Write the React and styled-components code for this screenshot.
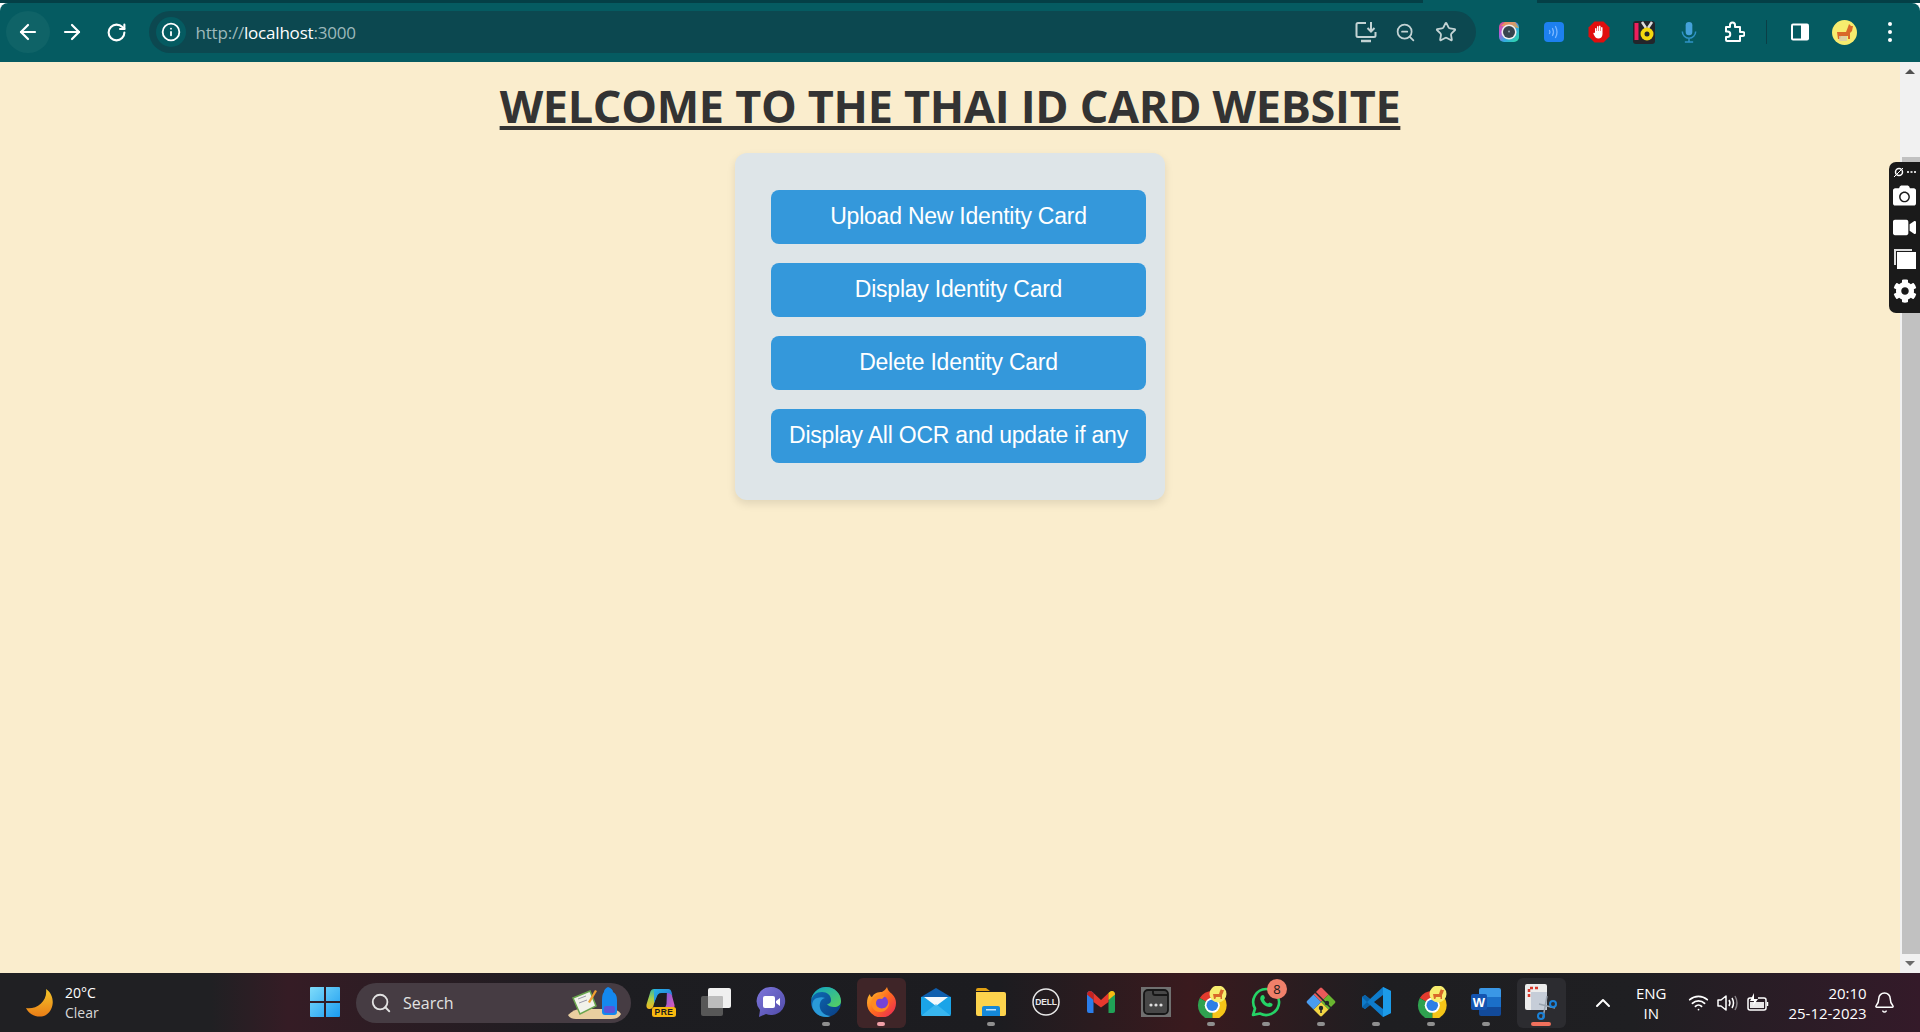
import styled, { createGlobalStyle } from "styled-components";
import {
  ArrowLeft,
  ArrowRight,
  RotateCw,
  Info,
  ZoomOut,
  Star,
  Search,
  ChevronUp,
  Bell,
  Wifi,
} from "lucide-react";
import { FaCamera, FaVideo, FaCog } from "react-icons/fa";

const GlobalStyle = createGlobalStyle`
  html, body {
    margin: 0;
    padding: 0;
    height: 100%;
    overflow: hidden;
  }
  #root {
    height: 100%;
  }
`;

const Shell = styled.div`
  display: flex;
  flex-direction: column;
  height: 1032px;
  font-family: "Open Sans", sans-serif;
`;

/* browser chrome */

const TabStrip = styled.div`
  display: flex;
  height: 3px;
  background: #043f46;
`;

const TabPiece = styled.div`
  width: 114px;
  margin-left: 1423px;
  background: #055b61;
`;

const Toolbar = styled.div`
  display: flex;
  align-items: center;
  height: 59px;
  padding: 0 0 1px 6px;
  box-sizing: border-box;
  background: #055b61;
  border-radius: 8px 8px 0 0;
  color: #fff;
`;

const NavButton = styled.div`
  display: flex;
  align-items: center;
  justify-content: center;
  width: 44px;
  height: 42px;
  margin-right: ${(p) => p.$gap || 0}px;
  border-radius: 50%;
  background: ${(p) => (p.$hover ? "#0f6367" : "transparent")};
`;

const AddressBar = styled.div`
  display: flex;
  align-items: center;
  width: 1327px;
  height: 42px;
  margin-left: 10.5px;
  padding: 0 10px 0 7px;
  box-sizing: border-box;
  border-radius: 21px;
  background: #0c4850;
`;

const InfoBadge = styled.div`
  display: flex;
  align-items: center;
  justify-content: center;
  width: 30px;
  height: 30px;
  border-radius: 50%;
  background: #055b61;
`;

const Url = styled.div`
  flex: 1;
  margin-left: 10px;
  font-size: 17px;
  letter-spacing: -0.2px;
  color: #9db9bb;

  b {
    font-weight: 400;
    color: #fff;
  }
`;

const BarIcon = styled.div`
  display: flex;
  align-items: center;
  justify-content: center;
  width: 40px;
  color: #c3d3d4;
`;

const ExtIcon = styled.div`
  display: flex;
  align-items: center;
  justify-content: center;
  width: 45px;
  height: 30px;
  margin-left: ${(p) => p.$offset || 0}px;
`;

const Divider = styled.div`
  width: 1px;
  height: 24px;
  margin: 0 10px;
  background: #0b3f46;
`;

const MenuDots = styled.div`
  display: flex;
  flex-direction: column;
  gap: 4px;

  i {
    width: 4px;
    height: 4px;
    border-radius: 50%;
    background: #fff;
  }
`;

/* page */

const Viewport = styled.div`
  position: relative;
  display: flex;
  flex: 1;
  min-height: 0;
`;

const Page = styled.main`
  flex: 1;
  display: flex;
  flex-direction: column;
  align-items: center;
  background: #faedcd;
`;

const Title = styled.h1`
  margin: 19px 0 22px;
  font-family: "Open Sans", sans-serif;
  font-size: 45px;
  line-height: 50px;
  font-weight: 700;
  letter-spacing: -0.3px;
  color: #333;
  text-decoration: underline;
  text-decoration-thickness: 4px;
  text-underline-offset: 3px;
`;

const Card = styled.div`
  display: flex;
  flex-direction: column;
  gap: 19px;
  width: 430px;
  padding: 37px 19px 37px 36px;
  box-sizing: border-box;
  border-radius: 12px;
  background: #dee5e8;
  box-shadow: 0 4px 8px rgba(0, 0, 0, 0.1);
`;

const ActionButton = styled.button`
  height: 54px;
  padding: 0 0 2px;
  border: 0;
  border-radius: 8px;
  background: #3498db;
  color: #fff;
  font-family: "Liberation Sans", Arial, sans-serif;
  font-size: 23px;
  letter-spacing: -0.23px;
`;

const Scrollbar = styled.div`
  position: relative;
  display: flex;
  flex-direction: column;
  align-items: center;
  width: 20px;
  background: #f1f1f1;
`;

const ScrollArrow = styled.div`
  width: 0;
  height: 0;
  margin: 7px 0;
  border-left: 5px solid transparent;
  border-right: 5px solid transparent;
  ${(p) => (p.$down ? "border-top: 5px solid #6b6b6b;" : "border-bottom: 5px solid #505050;")}
`;

const ScrollThumb = styled.div`
  flex: 1;
  width: 18px;
  margin: 76px 0 0 1px;
  background: #c1c1c1;
`;

const CaptureWidget = styled.div`
  position: absolute;
  top: 100px;
  right: 0;
  display: flex;
  flex-direction: column;
  align-items: center;
  gap: 9px;
  width: 31px;
  height: 151px;
  padding-top: 4px;
  box-sizing: border-box;
  border-radius: 7px 0 0 7px;
  background: #1a1a1a;
  color: #fff;
`;

const WidgetLogo = styled.div`
  display: flex;
  margin-bottom: -3.5px;
`;

/* taskbar */

const Taskbar = styled.footer`
  display: flex;
  align-items: center;
  height: 59px;
  color: #fff;
  background: linear-gradient(
    90deg,
    #202023 0,
    #202023 11%,
    #351c25 15%,
    #1d1d21 30%,
    #1c1c20 52%,
    #3a1a1e 62%,
    #1e1e21 72%,
    #1f1f22 85%,
    #341a29 100%
  );
`;

const Weather = styled.div`
  display: flex;
  align-items: center;
  gap: 11px;
  width: 297px;
  padding-left: 26px;
  box-sizing: border-box;
`;

const WeatherText = styled.div`
  font-size: 14px;
  line-height: 20px;

  span {
    display: block;
    color: #d8d8d8;
  }
`;

const SearchPill = styled.div`
  display: flex;
  align-items: center;
  gap: 11px;
  width: 275px;
  height: 40px;
  margin: 0 2.5px 0 4px;
  padding: 0 9px 0 14px;
  box-sizing: border-box;
  border-radius: 20px;
  background: #463c43;
  font-size: 16px;
  color: #e2e2e2;

  span {
    flex: 1;
  }
`;

const Cell = styled.div`
  position: relative;
  display: flex;
  align-items: center;
  justify-content: center;
  width: 55px;
  height: 50px;
  padding-bottom: 1px;
  box-sizing: border-box;
  border-radius: 6px;
`;

const CellGlow = styled.div`
  position: absolute;
  inset: 0 3px;
  border-radius: 6px;
  background: ${(p) => p.$bg};
`;

const CellIcon = styled.div`
  position: relative;
  display: flex;
`;

const RunDot = styled.div`
  position: absolute;
  left: 50%;
  bottom: 2px;
  width: ${(p) => p.$w || 8}px;
  height: 4px;
  transform: translateX(-50%);
  border-radius: 2px;
  background: ${(p) => p.$color || "#8f8f8f"};
`;

const CountBadge = styled.div`
  position: absolute;
  top: -8px;
  right: -6px;
  width: 20px;
  height: 20px;
  border-radius: 50%;
  background: #f0806a;
  color: #1a1a1a;
  font-size: 13px;
  line-height: 20px;
  text-align: center;
`;

const Tray = styled.div`
  display: flex;
  align-items: center;
  margin-left: 16.7px;
`;

const Chevron = styled.div`
  display: flex;
  justify-content: center;
  width: 36px;
`;

const Lang = styled.div`
  width: 60px;
  font-size: 15px;
  line-height: 20px;
  text-align: center;
`;

const Status = styled.div`
  display: flex;
  align-items: center;
  justify-content: center;
  width: 30px;
  margin-left: ${(p) => p.$offset || 0}px;
`;

const Clock = styled.div`
  width: 93.500px;
  font-size: 15px;
  line-height: 20px;
  text-align: right;
`;

const BellBox = styled.div`
  display: flex;
  justify-content: center;
  width: 28px;
  margin-left: 3.7px;
`;

/* drawn icons */

const InstallIcon = () => (
  <svg width="22" height="22" viewBox="0 0 22 22" fill="none" stroke="#c3d3d4" strokeWidth="2">
    <path d="M11 2H3a1.5 1.5 0 0 0-1.5 1.5v11A1.5 1.5 0 0 0 3 16h16a1.5 1.5 0 0 0 1.5-1.5V11" />
    <path d="M6 20h10" strokeWidth="2.5" />
    <path d="M16 1v9M12.5 7l3.5 3.5L19.500 7" />
  </svg>
);

const LensIcon = () => (
  <svg width="24" height="24" viewBox="0 0 24 24">
    <defs>
      <linearGradient id="lens" x1="0" y1="0" x2="1" y2="1">
        <stop offset="0" stopColor="#e64a78" />
        <stop offset="0.3" stopColor="#b85bd8" />
        <stop offset="0.6" stopColor="#32a9e0" />
        <stop offset="1" stopColor="#2fe0a0" />
      </linearGradient>
    </defs>
    <rect x="2" y="2" width="20" height="20" rx="5" fill="url(#lens)" />
    <path d="M4 6 8 2h10l4 6" fill="#f3a93c" opacity=".7" />
    <circle cx="12" cy="12" r="7.600" fill="#eee" />
    <circle cx="12" cy="12" r="6" fill="#37444e" />
    <circle cx="12" cy="11.500" r="1" fill="#8fa4b0" />
  </svg>
);

const WavesIcon = () => (
  <svg width="24" height="24" viewBox="0 0 24 24" fill="none" stroke="#7ab6ff" strokeLinecap="round" strokeWidth="1.300">
    <rect x="2" y="2" width="20" height="20" rx="4" fill="#1d80f0" stroke="none" />
    <path d="M7.500 10.500q1 1.500 0 3M10.500 8.500q2 3.500 0 7M13.500 6.500q3 5.500 0 11" />
  </svg>
);

const BlockIcon = () => (
  <svg width="24" height="24" viewBox="0 0 24 24">
    <path d="M7.500 1.500h9l6 6v9l-6 6h-9l-6-6v-9z" fill="#e00e0e" />
    <path d="M8 13V8.500a1 1 0 0 1 1.500 0V11h.5V6.500a1 1 0 0 1 1.500 0V11h.5V6a1 1 0 0 1 1.500 0v5h.5V7.500a1 1 0 0 1 1.500 0V14c0 3-2 4.500-4 4.500-2.500 0-3.500-1.500-5-4.500-.5-1.200.7-1.800 1.500-1z" fill="#fff" />
  </svg>
);

const MedalIcon = () => (
  <svg width="24" height="24" viewBox="0 0 24 24">
    <rect x="1" y="1" width="22" height="23" rx="3" fill="#23252b" />
    <rect x="2.500" y="3" width="4" height="17" fill="#ef1f5d" />
    <path d="M10 2l4 6M20 2l-4 6" stroke="#ddd" strokeWidth="2.500" />
    <circle cx="15" cy="14" r="6.500" fill="#f4d80f" />
    <circle cx="15" cy="14" r="2.500" fill="#23252b" />
  </svg>
);

const MicIcon = () => (
  <svg width="20" height="24" viewBox="0 0 24 26" fill="none" stroke="#2f93c6" strokeWidth="1.800">
    <rect x="8" y="1" width="8" height="16" rx="4" fill="#45a2da" stroke="none" />
    <path d="M4 12.500a8 8 0 0 0 16 0M12 20.500V25M7 25h10" />
  </svg>
);

const PuzzleIcon = () => (
  <svg width="22" height="22" viewBox="0 0 22 22" fill="none" stroke="#fff" strokeWidth="2" strokeLinejoin="round">
    <path d="M3 6h4V4a2.500 2.500 0 0 1 5 0v2h5v5h2.500a2 2 0 0 1 0 4H17v5H4a1 1 0 0 1-1-1v-3h1.500a2.700 2.700 0 0 0 0-5.500H3z" />
  </svg>
);

const PanelIcon = () => (
  <svg width="20" height="20" viewBox="0 0 20 20">
    <rect x="1" y="1.500" width="18" height="17" rx="2" fill="#fff" />
    <rect x="3" y="3.500" width="8" height="13" fill="#055b61" />
  </svg>
);

const CorgiAvatar = ({ size = 25 }) => (
  <svg width={size} height={size} viewBox="0 0 25 25">
    <circle cx="12.500" cy="12.500" r="12.500" fill="#f7ec6e" />
    <path d="M5 12h9l2-5 1-3 2 2 2 0-1 5-2 2v6h-2v-3H9l-1 3H6z" fill="#d9682a" />
    <path d="M7 16h8v5H7z" fill="#d8c9ae" opacity=".8" />
  </svg>
);

const LogoDots = () => (
  <svg width="24" height="12" viewBox="0 0 24 12" fill="none" stroke="#fff">
    <circle cx="6" cy="6" r="3.500" strokeWidth="1.500" />
    <path d="M1 11 10 2" strokeWidth="1" />
    <path d="M14 6h2M17.500 6h2M21 6h2" strokeWidth="2" strokeOpacity=".8" />
  </svg>
);

const WindowsStack = () => (
  <svg width="24" height="22" viewBox="0 0 24 22">
    <path d="M1 1h18v2H3v14H1z" fill="#ddd" />
    <rect x="4" y="4" width="19" height="17" fill="#fff" />
  </svg>
);

const Moon = () => (
  <svg width="28" height="28" viewBox="0 0 28 28">
    <defs>
      <linearGradient id="moon" x1="0" y1="0" x2="0" y2="1">
        <stop offset="0" stopColor="#f3c62a" />
        <stop offset="1" stopColor="#ea7d16" />
      </linearGradient>
    </defs>
    <path d="M20 0C29 6 29 20 20 26 13 30 3 26 0 19 10 21 22 12 20 0z" fill="url(#moon)" />
  </svg>
);

const WinLogo = () => (
  <svg width="30" height="30" viewBox="0 0 30 30">
    <defs>
      <linearGradient id="win" x1="0" y1="0" x2="1" y2="1">
        <stop offset="0" stopColor="#7fdcfa" />
        <stop offset="1" stopColor="#1a9bf0" />
      </linearGradient>
    </defs>
    <path d="M0 1a1 1 0 0 1 1-1h13v14H0zM16 0h13a1 1 0 0 1 1 1v13H16zM0 16h14v14H1a1 1 0 0 1-1-1zM16 16h14v13a1 1 0 0 1-1 1H16z" fill="url(#win)" />
  </svg>
);

const DeskArt = () => (
  <svg width="56" height="36" viewBox="0 0 56 36">
    <path d="M2 30q6-6 12-6h30q8 0 11 5-2 5-10 5H10q-6 0-8-4z" fill="#e9cfa0" />
    <path d="M7 13 24 6l6 15-16 8z" fill="#f2f2ea" stroke="#6aa54e" strokeWidth="1.500" />
    <path d="M12 14l8-3M13 18l8-3" stroke="#99a" strokeWidth="1" />
    <path d="M22 17 29 5l2 1-7 12z" fill="#f0a030" />
    <path d="M38 7q0-3 4-5 5 2 5 5 4 2 4 8v12q0 3-3 3H39q-3 0-3-3V15q0-6 2-8z" fill="#1488ee" />
    <rect x="38" y="21" width="11" height="7" rx="2" fill="#5a55d8" />
  </svg>
);

const CopilotIcon = () => (
  <svg width="30" height="30" viewBox="0 0 30 30">
    <defs>
      <linearGradient id="copA" x1="0" y1="0" x2="1" y2="1">
        <stop offset="0" stopColor="#25b4e6" />
        <stop offset="1" stopColor="#2a68d8" />
      </linearGradient>
      <linearGradient id="copB" x1="0" y1="0" x2="0" y2="1">
        <stop offset="0" stopColor="#35b6a8" />
        <stop offset="0.5" stopColor="#a8cf4a" />
        <stop offset="1" stopColor="#f6b81c" />
      </linearGradient>
      <linearGradient id="copC" x1="0" y1="0" x2="1" y2="1">
        <stop offset="0" stopColor="#6a5de0" />
        <stop offset="1" stopColor="#e05ab8" />
      </linearGradient>
    </defs>
    <path d="M21 2c2 0 3.500 1.500 4 3l3.500 13c.5 2-1 4-3 4H17c2-1 3-3 3.500-5z" fill="url(#copC)" />
    <path d="M8 2c-2 0-3.500 1.500-4 4L.5 17.500C0 20 1 22 3.500 22S7 20.500 7.500 18.500L11 6c.5-2 1.500-3.500 3-4z" fill="url(#copB)" />
    <path d="M8 2h14c2 0 3 1 3.500 3l1 4c-1-2-3-3-5-3h-6c-3 0-4 1.500-5 4.500L8 16z" fill="url(#copA)" />
    <rect x="6" y="20" width="24" height="10" rx="2.500" fill="#f8b810" />
    <text x="18" y="28" textAnchor="middle" fontSize="8.500" fontWeight="700" fill="#1a1a1a" fontFamily="Liberation Sans, sans-serif" letterSpacing="0.5">PRE</text>
  </svg>
);

const TaskViewIcon = () => (
  <svg width="30" height="28" viewBox="0 0 30 28">
    <rect x="0" y="8" width="22" height="20" rx="2" fill="#575757" />
    <rect x="7" y="0" width="23" height="20" rx="2" fill="#f0f0f0" />
    <rect x="7" y="8" width="15" height="12" rx="1" fill="#bcbcbc" />
  </svg>
);

const MeetIcon = () => (
  <svg width="30" height="30" viewBox="0 0 30 30">
    <defs>
      <linearGradient id="meet" x1="0" y1="0" x2="1" y2="1">
        <stop offset="0" stopColor="#7d76db" />
        <stop offset="1" stopColor="#4f4aa8" />
      </linearGradient>
    </defs>
    <path d="M15 0a14 14 0 1 1-5 27l-7 3 1-7A14 14 0 0 1 15 0z" fill="url(#meet)" />
    <rect x="7" y="9" width="12" height="12" rx="2" fill="#fff" />
    <path d="M20 14l4-3v8l-4-3z" fill="#fff" />
  </svg>
);

const EdgeIcon = () => (
  <svg width="30" height="30" viewBox="0 0 30 30">
    <defs>
      <linearGradient id="edgeA" x1="0" y1="0" x2="1" y2="1">
        <stop offset="0" stopColor="#0fa5c8" />
        <stop offset="1" stopColor="#58d25c" />
      </linearGradient>
      <linearGradient id="edgeB" x1="0" y1="0" x2="1" y2="1">
        <stop offset="0" stopColor="#0d6fb8" />
        <stop offset="1" stopColor="#0a3d82" />
      </linearGradient>
    </defs>
    <circle cx="15" cy="15" r="15" fill="url(#edgeB)" />
    <path d="M0 13C2 4 9 0 15 0c9 0 15 7 15 14 0 4-3 6-7 6-3 0-6-1-7-3 3 0 4-2 4-4 0-5-4-8-9-8-6 0-9 3-11 8z" fill="url(#edgeA)" />
    <path d="M14 11c-4 1-6 5-5 10 1 4 5 8 11 8-3 1-3 1-5 1C8 30 4 26 2 22c-2-5 0-10 4-11 3-1 6-1 8 0z" fill="#2a9ad8" />
  </svg>
);

const FirefoxIcon = () => (
  <svg width="30" height="30" viewBox="0 0 30 30">
    <defs>
      <linearGradient id="foxA" x1="0" y1="0" x2="1" y2="1">
        <stop offset="0" stopColor="#ffd030" />
        <stop offset="0.5" stopColor="#ff6b1e" />
        <stop offset="1" stopColor="#e8215c" />
      </linearGradient>
    </defs>
    <path d="M21 0c1 4 3 5 5 7 3 3 4 6 4 9a14.500 14.500 0 0 1-29 0c0-4 1-7 3-9 0 2 1 3 2 3 2-4 6-5 10-5 2-1 4-3 5-5z" fill="url(#foxA)" />
    <circle cx="15" cy="15.500" r="7" fill="#7443d6" />
    <path d="M7 11c3-3 8-4 12-2l-3 3c-3-1-6 0-6 4 0 5 6 7 10 4 2-2 3-4 3-6 1 6-3 11-9 11-7 0-11-8-7-14z" fill="#ff8a20" />
  </svg>
);

const MailIcon = () => (
  <svg width="30" height="28" viewBox="0 0 30 28">
    <path d="M0 9 15 0l15 9v2H0z" fill="#0f5fae" />
    <path d="M0 9h30v17a2 2 0 0 1-2 2H2a2 2 0 0 1-2-2z" fill="#1ba4e8" />
    <path d="M3 9h24l-12 9z" fill="#f4f8fb" />
    <path d="M0 28 15 16l15 12z" fill="#45bdf2" opacity=".7" />
  </svg>
);

const FolderIcon = () => (
  <svg width="30" height="28" viewBox="0 0 30 28">
    <path d="M0 2a2 2 0 0 1 2-2h8l4 3H0z" fill="#e0a012" />
    <path d="M0 4h28a2 2 0 0 1 2 2v20a2 2 0 0 1-2 2H2a2 2 0 0 1-2-2z" fill="#fcd34d" />
    <path d="M6 20a2 2 0 0 1 2-2h14a2 2 0 0 1 2 2v8H6z" fill="#1488d8" />
    <rect x="10" y="21" width="10" height="1.500" fill="#bfe4fb" />
  </svg>
);

const DellIcon = () => (
  <svg width="28" height="28" viewBox="0 0 28 28">
    <circle cx="14" cy="14" r="13" fill="none" stroke="#e8e8e8" strokeWidth="1.500" />
    <text x="14" y="17" textAnchor="middle" fontSize="8.500" fontWeight="700" fill="#e8e8e8" fontFamily="Liberation Sans, sans-serif" letterSpacing="-0.2">DELL</text>
  </svg>
);

const GmailIcon = () => (
  <svg width="28" height="22" viewBox="0 0 28 22">
    <path d="M0 3.500C0 .5 3 -1 5 .7L6.500 2v20H2a2 2 0 0 1-2-2z" fill="#2b7de9" />
    <path d="M28 3.500c0-3-3-4.500-5-2.800L21.500 2v20H26a2 2 0 0 0 2-2z" fill="#20a257" />
    <path d="M6.500 2 14 9l7.500-7v9L14 16.500 6.500 11z" fill="#e8392e" />
    <path d="M0 3.500 6.500 9V2L5 .7C3-1 0 .5 0 3.500z" fill="#c5221f" />
    <path d="M28 3.500 21.500 9V2L23 .7c2-1.700 5-.2 5 2.800z" fill="#f9bb12" />
  </svg>
);

const TileIcon = () => (
  <svg width="30" height="30" viewBox="0 0 30 30">
    <rect width="30" height="30" fill="#707070" />
    <rect x="3" y="3" width="24" height="24" rx="4" fill="#474747" stroke="#161616" strokeWidth="1.800" />
    <path d="M12 3v3a2 2 0 0 0 2 2h13" fill="none" stroke="#161616" strokeWidth="1.800" />
    <circle cx="10" cy="18" r="1.600" fill="#ddd" />
    <circle cx="15" cy="18" r="1.600" fill="#ddd" />
    <circle cx="20" cy="18" r="1.600" fill="#ddd" />
  </svg>
);

const ChromeIcon = () => (
  <svg width="32" height="32" viewBox="0 0 32 32">
    <g transform="translate(0 2) scale(0.72)">
      <path d="M24 24 6.680 14A20 20 0 0 1 41.320 14Z" fill="#e33b2e" />
      <path d="M24 24 41.320 14A20 20 0 0 1 24 44Z" fill="#f5c518" />
      <path d="M24 24 24 44A20 20 0 0 1 6.680 14Z" fill="#2fa14f" />
      <circle cx="24" cy="24" r="10.500" fill="#fff" />
      <circle cx="24" cy="24" r="8" fill="#2d7ee6" />
    </g>
    <g transform="translate(15 0)">
      <circle cx="8" cy="8" r="8.500" fill="#f7ec6e" />
      <path d="M3 8h6l1-3 1-2 1 1h2l-1 3-1 2v4h-1.500v-2H6l-.7 2H4z" fill="#d9682a" />
    </g>
  </svg>
);

const WhatsappIcon = () => (
  <svg width="30" height="30" viewBox="0 0 30 30" fill="none">
    <path d="M15 2a13 13 0 1 1-6 24.500L2 28l2-6.500A13 13 0 0 1 15 2z" stroke="#25d366" strokeWidth="2.600" strokeLinejoin="round" />
    <path d="M10.500 8.500c1-1 2-.6 2.500 0l1 2.500-1 1.500c.5 1.800 2.200 3.500 4 4l1.500-1 2.500 1c.6.500 1 1.500 0 2.500-1.200 1.200-3 1.400-5 .6-3-1.200-5.500-3.800-6.500-6.600-.6-1.800-.2-3.300 1-4.500z" fill="#25d366" />
  </svg>
);

const GitIcon = () => (
  <svg width="32" height="32" viewBox="0 0 32 32">
    <path d="M16 16 8.500 8.500 15 2a1.500 1.500 0 0 1 2 0l6.500 6.500z" fill="#ea5a5a" />
    <path d="M16 16 23.500 8.500 30 15a1.500 1.500 0 0 1 0 2l-6.500 6.500z" fill="#69b530" />
    <path d="M16 16 23.500 23.500 17 30a1.500 1.500 0 0 1-2 0l-6.500-6.500z" fill="#f2d544" />
    <path d="M16 16 8.500 23.500 2 17a1.500 1.500 0 0 1 0-2l6.500-6.500z" fill="#4a9cf0" />
    <path d="M9 5l18 18M16 20v7" stroke="#23252b" strokeWidth="1.500" />
    <circle cx="22" cy="17" r="2.200" fill="#23252b" />
    <circle cx="16" cy="22" r="2.200" fill="#23252b" />
  </svg>
);

const VsCodeIcon = () => (
  <svg width="30" height="30" viewBox="0 0 30 30">
    <path d="M22 0 30 4v22l-8 4-13-12-5 4-3-2v-10l3-2 5 4z" fill="#0e7ccb" />
    <path d="M22 0 30 4v22l-8 4z" fill="#1c9be8" />
    <path d="M22 8v14l-9-7z" fill="#1f1f22" />
    <path d="M1 10l3-2 5 4-3 3zM1 20l3 2 5-4-3-3z" fill="#0a62a8" />
  </svg>
);

const WordIcon = () => (
  <svg width="30" height="28" viewBox="0 0 30 28">
    <path d="M8 2a2 2 0 0 1 2-2h18a2 2 0 0 1 2 2v7H8z" fill="#3a97e6" />
    <rect x="8" y="9" width="22" height="10" fill="#1b6fc8" />
    <path d="M8 19h22v7a2 2 0 0 1-2 2H10a2 2 0 0 1-2-2z" fill="#124a9a" />
    <rect x="0" y="6" width="16" height="16" rx="2" fill="#1454b0" />
    <text x="8" y="19" textAnchor="middle" fontSize="13" fontWeight="700" fill="#fff" fontFamily="Liberation Sans, sans-serif">W</text>
  </svg>
);

const SnipIcon = () => (
  <svg width="32" height="36" viewBox="0 0 32 36" fill="none">
    <rect x="0" y="0" width="22" height="26" rx="2" fill="#ececec" />
    <path d="M4 13V4h11" stroke="#d8372a" strokeWidth="2.500" strokeDasharray="3 2" />
    <rect x="6" y="8" width="16" height="18" fill="#c6cdd8" />
    <path d="M18 34 22 12M30 24 14 20" stroke="#9aa4b0" strokeWidth="1.500" />
    <circle cx="16" cy="32" r="3" stroke="#1a82d8" strokeWidth="2" />
    <circle cx="28" cy="20" r="3" stroke="#1a82d8" strokeWidth="2" />
  </svg>
);

const SpeakerIcon = () => (
  <svg width="22" height="20" viewBox="0 0 22 20" fill="none" stroke="#fff" strokeWidth="1.500">
    <path d="M1 7v6h3l5 4V3L4 7z" strokeLinejoin="round" />
    <path d="M12 7q2 3 0 6M15 5q3 5 0 10" />
    <path d="M18 3q4 7 0 14" strokeOpacity=".45" />
  </svg>
);

const BatteryIcon = () => (
  <svg width="22" height="20" viewBox="0 0 22 20" fill="none" stroke="#fff" strokeWidth="1.500">
    <path d="M6 5H3a2 2 0 0 0-2 2v8a2 2 0 0 0 2 2h14a2 2 0 0 0 2-2V7a2 2 0 0 0-2-2h-6" />
    <path d="M20.500 9v4" />
    <path d="M7 0 3 8h4l-1 5 5-7H7z" fill="#fff" stroke="none" />
    <rect x="3" y="9" width="14" height="6" fill="#fff" stroke="none" opacity=".9" />
  </svg>
);

const actions = [
  "Upload New Identity Card",
  "Display Identity Card",
  "Delete Identity Card",
  "Display All OCR and update if any",
];

const taskApps = [
  { key: "copilot", icon: <CopilotIcon /> },
  { key: "taskview", icon: <TaskViewIcon /> },
  { key: "meet", icon: <MeetIcon /> },
  { key: "edge", icon: <EdgeIcon />, dot: true },
  { key: "firefox", icon: <FirefoxIcon />, dot: true, active: "#3f2528", dotColor: "#f0a0a8" },
  { key: "mail", icon: <MailIcon /> },
  { key: "folder", icon: <FolderIcon />, dot: true },
  { key: "dell", icon: <DellIcon /> },
  { key: "gmail", icon: <GmailIcon /> },
  { key: "tile", icon: <TileIcon /> },
  { key: "chrome", icon: <ChromeIcon />, dot: true },
  { key: "whatsapp", icon: <WhatsappIcon />, dot: true, count: 8 },
  { key: "git", icon: <GitIcon />, dot: true },
  { key: "vscode", icon: <VsCodeIcon />, dot: true },
  { key: "chrome2", icon: <ChromeIcon />, dot: true },
  { key: "word", icon: <WordIcon />, dot: true },
  { key: "snip", icon: <SnipIcon />, dot: true, active: "#2c2c30", dotColor: "#f0705c", dotWidth: 20 },
];

const App = () => {
  return (
    <Shell>
      <GlobalStyle />
      <TabStrip>
        <TabPiece />
      </TabStrip>
      <Toolbar>
        <NavButton $hover>
          <ArrowLeft size={24} strokeWidth={2.2} />
        </NavButton>
        <NavButton>
          <ArrowRight size={24} strokeWidth={2.2} />
        </NavButton>
        <NavButton>
          <RotateCw size={21} strokeWidth={2.4} />
        </NavButton>
        <AddressBar>
          <InfoBadge>
            <Info size={20} strokeWidth={2.2} />
          </InfoBadge>
          <Url>
            http://<b>localhost</b>:3000
          </Url>
          <BarIcon>
            <InstallIcon />
          </BarIcon>
          <BarIcon>
            <ZoomOut size={21} strokeWidth={2} />
          </BarIcon>
          <BarIcon>
            <Star size={22} strokeWidth={2} />
          </BarIcon>
        </AddressBar>
        <ExtIcon $offset={10.5}>
          <LensIcon />
        </ExtIcon>
        <ExtIcon>
          <WavesIcon />
        </ExtIcon>
        <ExtIcon>
          <BlockIcon />
        </ExtIcon>
        <ExtIcon>
          <MedalIcon />
        </ExtIcon>
        <ExtIcon>
          <MicIcon />
        </ExtIcon>
        <ExtIcon>
          <PuzzleIcon />
        </ExtIcon>
        <Divider />
        <ExtIcon>
          <PanelIcon />
        </ExtIcon>
        <ExtIcon>
          <CorgiAvatar />
        </ExtIcon>
        <ExtIcon>
          <MenuDots>
            <i />
            <i />
            <i />
          </MenuDots>
        </ExtIcon>
      </Toolbar>

      <Viewport>
        <Page>
          <Title>WELCOME TO THE THAI ID CARD WEBSITE</Title>
          <Card>
            {actions.map((label) => (
              <ActionButton key={label}>{label}</ActionButton>
            ))}
          </Card>
        </Page>
        <Scrollbar>
          <ScrollArrow />
          <ScrollThumb />
          <ScrollArrow $down />
        </Scrollbar>
        <CaptureWidget>
          <WidgetLogo>
            <LogoDots />
          </WidgetLogo>
          <FaCamera size={23} />
          <FaVideo size={23} />
          <WindowsStack />
          <FaCog size={24} />
        </CaptureWidget>
      </Viewport>

      <Taskbar>
        <Weather>
          <Moon />
          <WeatherText>
            20°C
            <span>Clear</span>
          </WeatherText>
        </Weather>
        <Cell>
          <WinLogo />
        </Cell>
        <SearchPill>
          <Search size={22} strokeWidth={2} />
          <span>Search</span>
          <DeskArt />
        </SearchPill>
        {taskApps.map((app) => (
          <Cell key={app.key}>
            {app.active && <CellGlow $bg={app.active} />}
            <CellIcon>
              {app.icon}
              {app.count && <CountBadge>{app.count}</CountBadge>}
            </CellIcon>
            {app.dot && <RunDot $color={app.dotColor} $w={app.dotWidth} />}
          </Cell>
        ))}
        <Tray>
          <Chevron>
            <ChevronUp size={24} strokeWidth={2} />
          </Chevron>
          <Lang>
            ENG
            <br />
            IN
          </Lang>
          <Status $offset={2}>
            <Wifi size={21} strokeWidth={2} />
          </Status>
          <Status>
            <SpeakerIcon />
          </Status>
          <Status>
            <BatteryIcon />
          </Status>
          <Clock>
            20:10
            <br />
            25-12-2023
          </Clock>
          <BellBox>
            <Bell size={23} strokeWidth={1.6} />
          </BellBox>
        </Tray>
      </Taskbar>
    </Shell>
  );
};

export default App;
